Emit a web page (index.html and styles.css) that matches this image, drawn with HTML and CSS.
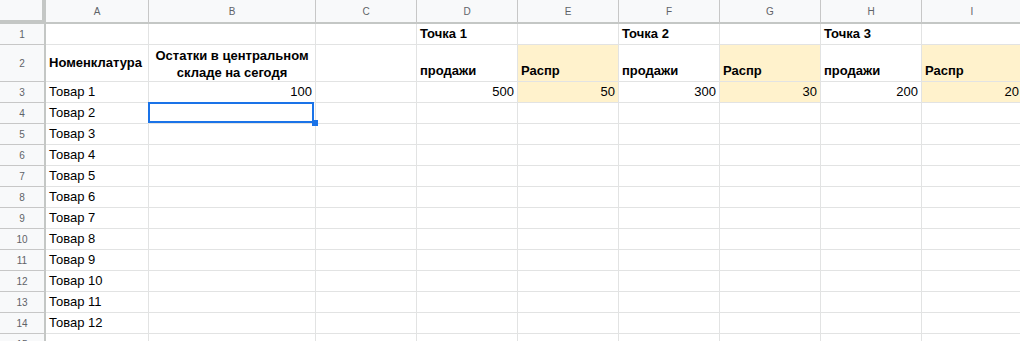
FILE: index.html
```
<!DOCTYPE html>
<html lang="ru">
<head>
    <meta charset="UTF-8">
    <meta name="viewport" content="width=device-width, initial-scale=1.0">
    <title>Распределение</title>
    <link rel="stylesheet" href="styles.css">
</head>
<body>
    <div class="sheet">
        <!-- шапка с буквами колонок -->
        <div class="corner"></div>
        <div class="colhead">A</div>
        <div class="colhead">B</div>
        <div class="colhead">C</div>
        <div class="colhead">D</div>
        <div class="colhead">E</div>
        <div class="colhead">F</div>
        <div class="colhead">G</div>
        <div class="colhead">H</div>
        <div class="colhead">I</div>

        <div class="rowhead">1</div>
        <div class="cell"></div>
        <div class="cell"></div>
        <div class="cell"></div>
        <div class="cell b">Точка 1</div>
        <div class="cell"></div>
        <div class="cell b">Точка 2</div>
        <div class="cell"></div>
        <div class="cell b">Точка 3</div>
        <div class="cell"></div>

        <div class="rowhead">2</div>
        <div class="cell b mid">Номенклатура</div>
        <div class="cell b mid wrap">Остатки в центральном складе на сегодя</div>
        <div class="cell"></div>
        <div class="cell b">продажи</div>
        <div class="cell b yellow">Распр</div>
        <div class="cell b">продажи</div>
        <div class="cell b yellow">Распр</div>
        <div class="cell b">продажи</div>
        <div class="cell b yellow">Распр</div>

        <div class="rowhead">3</div>
        <div class="cell">Товар 1</div>
        <div class="cell num">100</div>
        <div class="cell"></div>
        <div class="cell num">500</div>
        <div class="cell num yellow">50</div>
        <div class="cell num">300</div>
        <div class="cell num yellow">30</div>
        <div class="cell num">200</div>
        <div class="cell num yellow">20</div>

        <div class="rowhead">4</div>
        <div class="cell">Товар 2</div>
        <div class="cell active"></div>
        <div class="cell"></div><div class="cell"></div><div class="cell"></div><div class="cell"></div><div class="cell"></div><div class="cell"></div><div class="cell"></div>

        <div class="rowhead">5</div>
        <div class="cell">Товар 3</div>
        <div class="cell"></div><div class="cell"></div><div class="cell"></div><div class="cell"></div><div class="cell"></div><div class="cell"></div><div class="cell"></div><div class="cell"></div>

        <div class="rowhead">6</div>
        <div class="cell">Товар 4</div>
        <div class="cell"></div><div class="cell"></div><div class="cell"></div><div class="cell"></div><div class="cell"></div><div class="cell"></div><div class="cell"></div><div class="cell"></div>

        <div class="rowhead">7</div>
        <div class="cell">Товар 5</div>
        <div class="cell"></div><div class="cell"></div><div class="cell"></div><div class="cell"></div><div class="cell"></div><div class="cell"></div><div class="cell"></div><div class="cell"></div>

        <div class="rowhead">8</div>
        <div class="cell">Товар 6</div>
        <div class="cell"></div><div class="cell"></div><div class="cell"></div><div class="cell"></div><div class="cell"></div><div class="cell"></div><div class="cell"></div><div class="cell"></div>

        <div class="rowhead">9</div>
        <div class="cell">Товар 7</div>
        <div class="cell"></div><div class="cell"></div><div class="cell"></div><div class="cell"></div><div class="cell"></div><div class="cell"></div><div class="cell"></div><div class="cell"></div>

        <div class="rowhead">10</div>
        <div class="cell">Товар 8</div>
        <div class="cell"></div><div class="cell"></div><div class="cell"></div><div class="cell"></div><div class="cell"></div><div class="cell"></div><div class="cell"></div><div class="cell"></div>

        <div class="rowhead">11</div>
        <div class="cell">Товар 9</div>
        <div class="cell"></div><div class="cell"></div><div class="cell"></div><div class="cell"></div><div class="cell"></div><div class="cell"></div><div class="cell"></div><div class="cell"></div>

        <div class="rowhead">12</div>
        <div class="cell">Товар 10</div>
        <div class="cell"></div><div class="cell"></div><div class="cell"></div><div class="cell"></div><div class="cell"></div><div class="cell"></div><div class="cell"></div><div class="cell"></div>

        <div class="rowhead">13</div>
        <div class="cell">Товар 11</div>
        <div class="cell"></div><div class="cell"></div><div class="cell"></div><div class="cell"></div><div class="cell"></div><div class="cell"></div><div class="cell"></div><div class="cell"></div>

        <div class="rowhead">14</div>
        <div class="cell">Товар 12</div>
        <div class="cell"></div><div class="cell"></div><div class="cell"></div><div class="cell"></div><div class="cell"></div><div class="cell"></div><div class="cell"></div><div class="cell"></div>

        <div class="rowhead">15</div>
        <div class="cell"></div>
        <div class="cell"></div><div class="cell"></div><div class="cell"></div><div class="cell"></div><div class="cell"></div><div class="cell"></div><div class="cell"></div><div class="cell"></div>
    </div>
</body>
</html>
```

FILE: styles.css
```
*{
    margin: 0;
    padding: 0;
    box-sizing: border-box;
}
body{
    width: 1020px;
    height: 341px;
    overflow: hidden;
    background-color: #fff;
    font-family: "Liberation Sans", Arial, sans-serif;
}
.sheet{
    display: grid;
    grid-template-columns: 46px 103px 167px repeat(7, 101px);
    grid-template-rows: 24px 21px 37px repeat(13, 21px);
}
.corner{
    background-color: #f8f9fa;
    border-right: 4px solid #c4c7c5;
    border-bottom: 4px solid #c4c7c5;
}
.colhead{
    background-color: #f8f9fa;
    border-right: 1px solid #c7c7c7;
    border-bottom: 2px solid #c4c7c5;
    color: #5f6368;
    font-size: 10px;
    display: flex;
    align-items: center;
    justify-content: center;
    padding-top: 1px;
}
.rowhead{
    background-color: #f8f9fa;
    border-right: 2px solid #c4c7c5;
    border-bottom: 1px solid #c7c7c7;
    color: #5f6368;
    font-size: 10px;
    display: flex;
    align-items: center;
    justify-content: center;
}
.cell{
    position: relative;
    border-right: 1px solid #e2e3e3;
    border-bottom: 1px solid #e2e3e3;
    font-size: 13px;
    line-height: 16px;
    color: #000;
    padding: 0 3px 2px 3px;
    white-space: nowrap;
    display: flex;
    align-items: flex-end;
}
.b{
    font-weight: bold;
}
.num{
    justify-content: flex-end;
}
.mid{
    align-items: center;
    padding-bottom: 0;
}
.wrap{
    white-space: normal;
    text-align: center;
    justify-content: center;
    line-height: 17px;
    padding-top: 1px;
}
.yellow{
    background-color: #fff2cc;
}
/* рамка выделенной ячейки, поверх соседних строк */
.active{
    z-index: 2;
}
.active::before{
    content: "";
    position: absolute;
    top: -1px;
    left: -1px;
    right: 1px;
    bottom: 0;
    border: 2px solid #1a73e8;
}
.active::after{
    content: "";
    position: absolute;
    right: -3px;
    bottom: -3px;
    width: 6px;
    height: 6px;
    background-color: #1a73e8;
}
```
